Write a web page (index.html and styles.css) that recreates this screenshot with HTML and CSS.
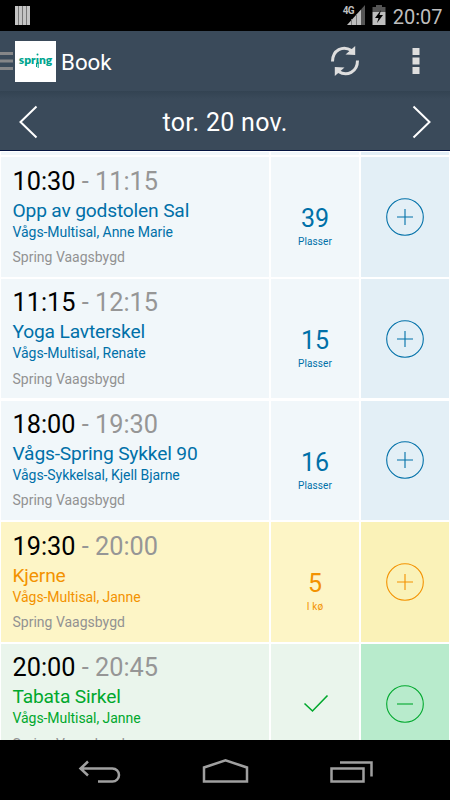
FILE: index.html
```html
<!DOCTYPE html>
<html lang="no">
<head>
<meta charset="utf-8">
<title>Book</title>
<link rel="stylesheet" href="styles.css">
</head>
<body>
<div class="phone">
  <header class="status">
    <svg class="bars" width="16" height="20" viewBox="0 0 16 20"><path fill="#777" d="M0 0H15V19H0Z"/><path fill="#c4c4c4" d="M0 0h3v19H0zM4 0h3v19H4zM8 0h3v19H8zM12 0h3v19h-3z"/></svg>
    <div class="status-right">
      <span class="net">4G</span>
      <svg class="signal" width="19" height="20" viewBox="0 0 19 20"><path fill="#555" d="M18 0V20H14V4.500Z"/><path fill="#bebebe" d="M14 4.500V20H0Z"/><path stroke="#777" d="M4.500 14V20M9.500 9V20"/></svg>
      <svg class="battery" width="14" height="21" viewBox="0 0 14 21"><path fill="#555" d="M4 0h6v2h3.500v5H.5V2H4Z"/><path fill="#bebebe" d="M.5 7h13v13H.5Z"/><path fill="#000" d="M9 5 3 13h3.500L5 18l6-8H7.500Z"/></svg>
      <span class="clock">20:07</span>
    </div>
  </header>
  <div class="action">
    <svg class="drawer" width="13" height="20" viewBox="0 0 13 20"><path fill="#858688" d="M0 1h13v3H0zM0 8.500h13v3H0zM0 16h13v3H0z"/></svg>
    <div class="logo"><span>spr<i class="logo-i">ı<svg width="7" height="16" viewBox="0 0 7 16"><path stroke="#00a58f" stroke-width="1" d="M1.500 10v4M3.200 9v6"/><circle cx="2.500" cy="1.500" r="1" fill="#00a58f"/></svg></i>ng</span></div>
    <h1>Book</h1>
    <svg class="refresh" width="30" height="32" viewBox="0 0 30 32"><g fill="none" stroke="#dedede" stroke-width="3"><path d="M2.500 16.500C2.500 5 13 0 21.500 5.500"/><path d="M27.500 15.500C27.500 27 17 32 8.500 26.500"/></g><path fill="#dedede" d="M25.200 1V10L15.500 9.500ZM4.800 31V22L14.500 22.500Z"/></svg>
    <svg class="more" width="8" height="28" viewBox="0 0 8 28"><path fill="#dedede" d="M.5 1h7v7h-7zM.5 10.500h7v7h-7zM.5 20h7v7h-7z"/></svg>
  </div>
  <nav class="date">
    <svg width="20" height="34" viewBox="0 0 20 34"><path class="chev" d="M17.500 1.500 1.500 17 17.500 32.500"/></svg>
    <span>tor. 20 nov.</span>
    <svg width="20" height="34" viewBox="0 0 20 34"><path class="chev" d="M2.500 1.500 18.500 17 2.500 32.500"/></svg>
  </nav>
  <main class="list">
    <div class="row sliver"><div></div><div></div><div class="act"></div></div>
    <div class="row blue">
      <div class="info"><p class="time">10:30 <b>- 11:15</b></p><p class="name">Opp av godstolen Sal</p><p class="room">Vågs-Multisal, Anne Marie</p><p class="place">Spring Vaagsbygd</p></div>
      <div class="count"><strong>39</strong><small>Plasser</small></div>
      <div class="act"><svg width="40" height="40" viewBox="0 0 40 40"><circle cx="20" cy="20" r="18.300"/><path d="M12 20H28M20 12V28"/></svg></div>
    </div>
    <div class="row blue">
      <div class="info"><p class="time">11:15 <b>- 12:15</b></p><p class="name">Yoga Lavterskel</p><p class="room">Vågs-Multisal, Renate</p><p class="place">Spring Vaagsbygd</p></div>
      <div class="count"><strong>15</strong><small>Plasser</small></div>
      <div class="act"><svg width="40" height="40" viewBox="0 0 40 40"><circle cx="20" cy="20" r="18.300"/><path d="M12 20H28M20 12V28"/></svg></div>
    </div>
    <div class="row blue">
      <div class="info"><p class="time">18:00 <b>- 19:30</b></p><p class="name">Vågs-Spring Sykkel 90</p><p class="room">Vågs-Sykkelsal, Kjell Bjarne</p><p class="place">Spring Vaagsbygd</p></div>
      <div class="count"><strong>16</strong><small>Plasser</small></div>
      <div class="act"><svg width="40" height="40" viewBox="0 0 40 40"><circle cx="20" cy="20" r="18.300"/><path d="M12 20H28M20 12V28"/></svg></div>
    </div>
    <div class="row yellow">
      <div class="info"><p class="time">19:30 <b>- 20:00</b></p><p class="name">Kjerne</p><p class="room">Vågs-Multisal, Janne</p><p class="place">Spring Vaagsbygd</p></div>
      <div class="count"><strong>5</strong><small>I kø</small></div>
      <div class="act"><svg width="40" height="40" viewBox="0 0 40 40"><circle cx="20" cy="20" r="18.300"/><path d="M12 20H28M20 12V28"/></svg></div>
    </div>
    <div class="row green">
      <div class="info"><p class="time">20:00 <b>- 20:45</b></p><p class="name">Tabata Sirkel</p><p class="room">Vågs-Multisal, Janne</p><p class="place">Spring Vaagsbygd</p></div>
      <div class="count"><svg class="check" width="26" height="20" viewBox="0 0 26 20"><path d="M1.500 9.500 9.500 17 24.500 1.500"/></svg></div>
      <div class="act"><svg width="40" height="40" viewBox="0 0 40 40"><circle cx="20" cy="20" r="18.300"/><path d="M12 20H28"/></svg></div>
    </div>
  </main>
  <footer class="nav">
    <svg width="44" height="26" viewBox="0 0 44 26"><path d="M11 3.500 3.500 10.500 11 17.500M3.500 10.500H35.500a6.500 6.500 0 0 1 0 13H21"/></svg>
    <svg width="48" height="26" viewBox="0 0 48 26"><path d="M2 23.500V9.500L23.500 2.300 45 9.500V23.500Z"/></svg>
    <svg width="44" height="26" viewBox="0 0 44 26"><path d="M1.500 10.500H33.500V23.500H1.500ZM10 4.500H41.500V18.500"/></svg>
  </footer>
</div>
</body>
</html>
```
FILE: styles.css
```css
* { box-sizing: border-box; margin: 0; }
body { font-family: Roboto, sans-serif; background: #000; }
svg { display: block; fill: none; flex: none; }
.phone { width: 450px; height: 800px; display: flex; flex-direction: column; overflow: hidden; background: #000; }
.status { height: 31px; flex: none; display: flex; justify-content: space-between; padding: 6px 7.500px 0 15px; }
.status-right { display: flex; color: #bebebe; }
.net { font: bold 10px/10px "Roboto", sans-serif; width: 10px; white-space: nowrap; letter-spacing: -.6px; margin-right: -6px; }
.signal { margin: -1px 6px 0 0; }
.battery { margin: -1px 7px 0 0; }
.clock { font-size: 20px; line-height: 22px; }
.action { height: 60px; flex: none; display: flex; align-items: center; background: #3a4a5a; color: #fff; }
.drawer { margin-right: 2px; }
.logo { width: 41px; height: 41px; background: #fff; display: flex; justify-content: center; align-items: center; color: #00a58f; font: 800 12px/14px Lato, sans-serif; padding-bottom: 2px; }
.logo-i { position: relative; font-style: normal; }
.logo-i svg { position: absolute; left: -1px; top: 1px; }
.action h1 { font-size: 22.300px; font-weight: 400; margin: 2px 0 0 5px; flex: 1; }
.refresh { margin-right: 52px; }
.more { margin-right: 30px; }
.date { height: 60px; flex: none; display: flex; align-items: center; justify-content: space-between; padding: 2px 18.500px 0; background: linear-gradient(#334352, #3a4a5a 8px); border-bottom: 1px solid #051440; color: #fff; font-size: 25px; letter-spacing: .3px; }
.date span { padding-top: 1px; }
.chev { stroke: #fff; stroke-width: 2; }
.list { height: 589px; flex: none; overflow: hidden; background: #fff; padding: 1px 1px 0; display: flex; flex-direction: column; gap: 2.350px; }
.row { display: grid; grid-template-columns: 268px 88px 88px; gap: 2px; height: 119.320px; flex: none; --ink: #0070a8; --tint: #f1f7fa; --strong: #e3eff6; color: var(--ink); }
.row > div { background: var(--tint); }
.row > .act { background: var(--strong); }
.sliver { height: 3px; }
.yellow { --ink: #f39200; --tint: #fdf5c6; --strong: #faf2b8; }
.green { --ink: #00a82d; --tint: #eaf5ec; --strong: #b8ebcc; }
.info { padding: 9.200px 0 0 11.500px; white-space: nowrap; }
.time { font-size: 25.300px; line-height: 29px; color: #000; }
.time b { color: #969696; font-weight: 400; }
.name { font-size: 19.200px; font-weight: 400; line-height: 24px; margin-top: 3px; letter-spacing: -.17px; }
.room { font-size: 14px; line-height: 18px; letter-spacing: -.06px; }
.place { font-size: 14px; line-height: 18px; margin-top: 7.600px; color: #929292; }
.count { display: flex; flex-direction: column; align-items: center; padding-top: 47px; }
.count strong { font-size: 25px; line-height: 30px; font-weight: 400; }
.count small { font-size: 10px; line-height: 14px; margin-top: 1px; letter-spacing: .1px; }
.act { display: flex; justify-content: center; align-items: center; }
.act svg { stroke: var(--ink); stroke-width: 1.100; }
.check { stroke: var(--ink); stroke-width: 1.600; margin-top: 3px; margin-left: 1px; }
.nav { height: 60px; display: flex; justify-content: space-between; padding: 18px 76px 0 77px; }
.nav path { stroke: #a0a0a0; stroke-width: 2.500; }
```
